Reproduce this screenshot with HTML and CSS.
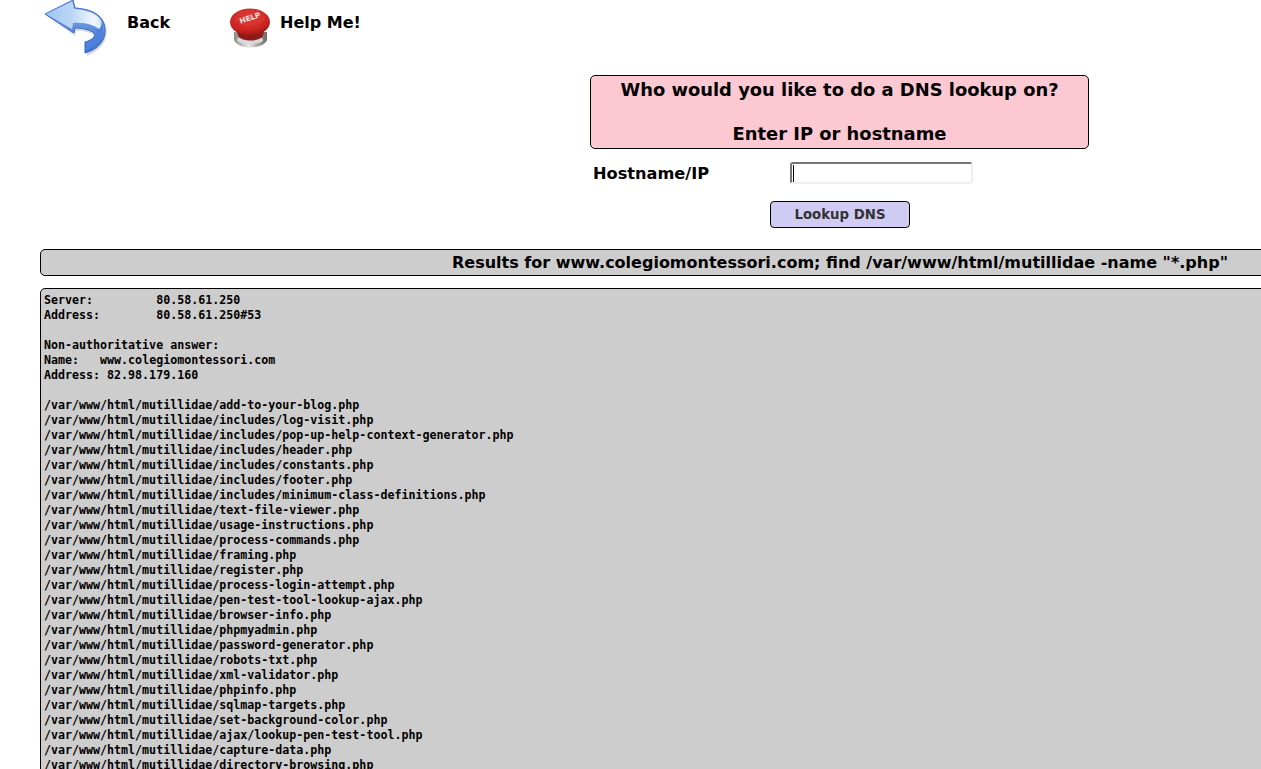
FILE: index.html
```html
<!DOCTYPE html>
<html lang="en">
<head>
<meta charset="utf-8">
<title>DNS Lookup</title>
<link rel="stylesheet" href="styles.css">
</head>
<body>
<nav class="topnav">
  <a class="navlink back-link" href="#">
    <svg class="back-icon" viewBox="0 0 72 60" width="72" height="60" aria-hidden="true">
      <defs>
        <linearGradient id="bk" x1="0" y1="0" x2="1" y2="0"><stop offset="0" stop-color="#9cc4f0"/><stop offset=".5" stop-color="#bfd9f6"/><stop offset=".85" stop-color="#f0f6fd"/><stop offset="1" stop-color="#d6e5f8"/></linearGradient>
        <linearGradient id="bs" x1="0" y1="0" x2="0" y2="1"><stop offset="0" stop-color="#8eb2ec"/><stop offset="1" stop-color="#3a6ed0"/></linearGradient>
      </defs>
      <path d="M7 16 L34 2 L36 10 C52 11 66 16 67 31 C67 43 58 52 47 56 L46 46 C54 42 57 38 55 36 C50 32 44 31 36 31 L35 36Z" fill="#7f8794" opacity=".3"/>
      <path d="M5 14 L33 0 L35 8 C50 9 64 14 65 29 C66 41 57 50 45 53 L45 42 C52 40 56 37 54 33 C50 30 43 28 35 28 L34 33Z" fill="url(#bs)" stroke="#3a68c4" stroke-width="1" stroke-linejoin="round"/>
      <path d="M6 14 L32 1.500 L34 9 C48 10 58 14 61 21 C63 25 62 29 60 30 C56 26 46 22 33 23 L32 29Z" fill="url(#bk)"/>
      <path d="M61 22 C65 28 64 40 46 51 L46 43 C54 40 58 35 56 30 C60 30 62 26 61 22Z" fill="#4f80dc"/>
    </svg>
    <span class="back-text">Back</span>
  </a>
  <a class="navlink help-link" href="#">
    <svg class="help-icon" viewBox="0 0 52 48" width="52" height="48" aria-hidden="true">
      <defs>
        <radialGradient id="hr" cx=".45" cy=".3" r=".75"><stop offset="0" stop-color="#e2403a"/><stop offset=".7" stop-color="#c9231f"/><stop offset="1" stop-color="#8a1613"/></radialGradient>
        <linearGradient id="hb" x1="0" y1="0" x2="1" y2="0"><stop offset="0" stop-color="#8a8a88"/><stop offset=".45" stop-color="#e8e8e6"/><stop offset="1" stop-color="#666664"/></linearGradient>
      </defs>
      <path d="M9 28 H42 V36 C38 46 13 46 9 36Z" fill="url(#hb)"/>
      <ellipse cx="25" cy="36" rx="13" ry="4" fill="#d8d8d6"/>
      <path d="M11 22 H40 L38 32 C34 38 17 38 13 32Z" fill="#8f1a17"/>
      <ellipse cx="25" cy="18" rx="20" ry="13.500" fill="url(#hr)"/>
      <ellipse cx="25" cy="14" rx="15" ry="7.500" fill="#d7352f"/>
      <text class="help-badge" x="25" y="16.500" text-anchor="middle" transform="rotate(-18 25 14)">HELP</text>
    </svg>
    <span class="help-text">Help Me!</span>
  </a>
</nav>

<main class="content">
  <section class="form-area">
    <div class="prompt">Who would you like to do a DNS lookup on?<br><br>Enter IP or hostname</div>
    <div class="field-row">
      <label class="field-label" for="host">Hostname/IP</label>
      <input class="field-input" id="host" type="text">
    </div>
    <div class="button-row"><button class="lookup-btn" type="button">Lookup DNS</button></div>
  </section>

  <h2 class="results-title">Results for www.colegiomontessori.com; find /var/www/html/mutillidae -name "*.php"</h2>

  <pre class="results-output">Server:		80.58.61.250
Address:	80.58.61.250#53

Non-authoritative answer:
Name:	www.colegiomontessori.com
Address: 82.98.179.160

/var/www/html/mutillidae/add-to-your-blog.php
/var/www/html/mutillidae/includes/log-visit.php
/var/www/html/mutillidae/includes/pop-up-help-context-generator.php
/var/www/html/mutillidae/includes/header.php
/var/www/html/mutillidae/includes/constants.php
/var/www/html/mutillidae/includes/footer.php
/var/www/html/mutillidae/includes/minimum-class-definitions.php
/var/www/html/mutillidae/text-file-viewer.php
/var/www/html/mutillidae/usage-instructions.php
/var/www/html/mutillidae/process-commands.php
/var/www/html/mutillidae/framing.php
/var/www/html/mutillidae/register.php
/var/www/html/mutillidae/process-login-attempt.php
/var/www/html/mutillidae/pen-test-tool-lookup-ajax.php
/var/www/html/mutillidae/browser-info.php
/var/www/html/mutillidae/phpmyadmin.php
/var/www/html/mutillidae/password-generator.php
/var/www/html/mutillidae/robots-txt.php
/var/www/html/mutillidae/xml-validator.php
/var/www/html/mutillidae/phpinfo.php
/var/www/html/mutillidae/sqlmap-targets.php
/var/www/html/mutillidae/set-background-color.php
/var/www/html/mutillidae/ajax/lookup-pen-test-tool.php
/var/www/html/mutillidae/capture-data.php
/var/www/html/mutillidae/directory-browsing.php</pre>
</main>
</body>
</html>
```
FILE: styles.css
```css
html, body {
  margin: 0;
  padding: 0;
  height: 769px;
  overflow: hidden;
  background: #fff;
}
body {
  font-family: "DejaVu Sans", sans-serif;
  color: #000;
}
.topnav {
  display: flex;
  align-items: flex-start;
  height: 75px;
  padding-left: 40px;
}
.navlink {
  display: flex;
  align-items: flex-start;
  color: #000;
  text-decoration: none;
  font-weight: bold;
  font-size: 16px;
  line-height: 19px;
}
.back-icon { display: block; }
.back-text { margin: 13px 0 0 15px; width: 98px; }
.help-icon { display: block; margin-top: 4px; margin-right: 3px; }
.help-text { margin-top: 13px; }
.help-badge { font: bold 7.500px "DejaVu Sans", sans-serif; fill: #f8e4e2; }
.content {
  width: 1600px;
  margin-left: 40px;
}
.form-area {
  display: flex;
  flex-direction: column;
  align-items: center;
  margin-right: 1px;
}
.prompt {
  box-sizing: border-box;
  width: 499px;
  height: 74px;
  background: #fcc8d1;
  border: 1px solid #000;
  border-radius: 5px;
  text-align: center;
  font-weight: bold;
  font-size: 17.900px;
  line-height: 22px;
  padding-top: 3px;
}
.field-row {
  width: 499px;
  display: flex;
  align-items: center;
  height: 24px;
  margin-top: 12px;
}
.field-label {
  font-weight: bold;
  font-size: 16.200px;
  width: 200px;
  padding-left: 3px;
  box-sizing: border-box;
}
.field-input {
  box-sizing: border-box;
  width: 183px;
  height: 22px;
  margin: 0;
  padding: 0 2px;
  border: 2px solid;
  border-color: #767676 #f1efe9 #f1efe9 #767676;
  border-radius: 3px;
  background: linear-gradient(#000, #000) 1px center / 1px 17px no-repeat #fff;
}
.button-row {
  display: flex;
  justify-content: center;
  width: 499px;
  margin-top: 16px;
}
.lookup-btn {
  box-sizing: border-box;
  width: 140px;
  height: 27px;
  padding: 0;
  margin-left: 1px;
  background: #d0cbf3;
  border: 1px solid #000;
  border-radius: 4px;
  color: #333;
  font: bold 13.300px "DejaVu Sans", sans-serif;
}
.results-title {
  box-sizing: border-box;
  height: 27px;
  margin: 21px 0 0;
  background: #cdcdcd;
  border: 1px solid #000;
  border-radius: 5px;
  text-align: center;
  font-size: 16px;
  font-weight: bold;
  line-height: 25px;
}
.results-output {
  box-sizing: border-box;
  margin: 12px 0 0;
  padding: 4px 3px 3px;
  background: #cdcdcd;
  border: 1px solid #000;
  border-radius: 5px;
  font: bold 11.655px/15px "DejaVu Sans Mono", monospace;
  tab-size: 8;
  min-height: 600px;
}
```
